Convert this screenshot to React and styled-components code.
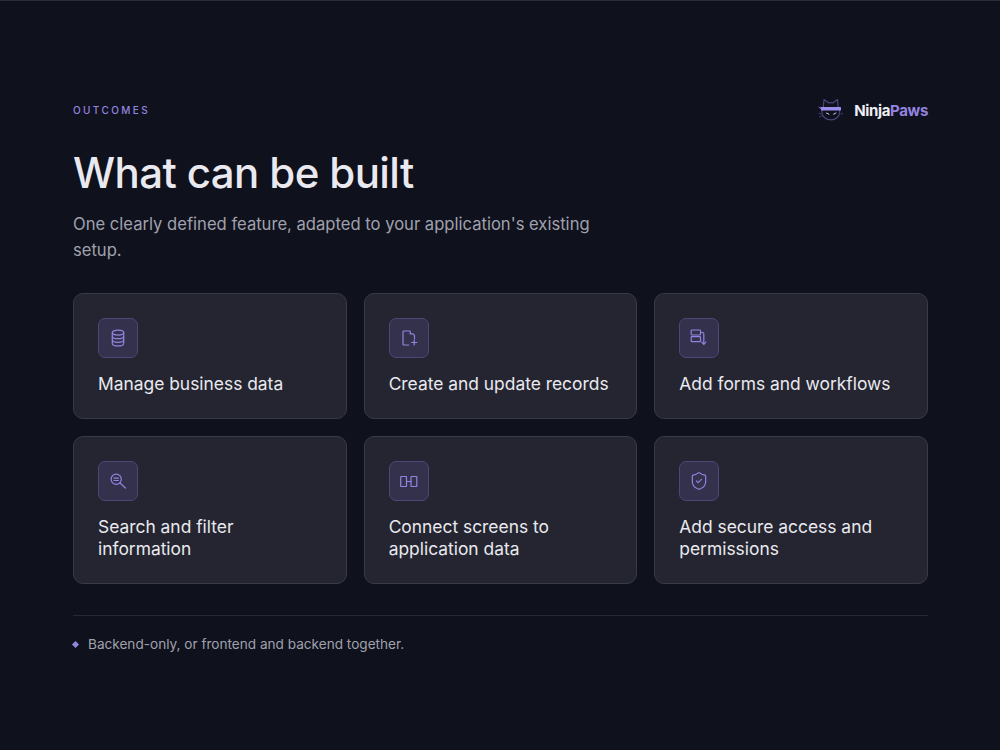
import React from "react";
import styled, { createGlobalStyle } from "styled-components";
import { ShieldCheck } from "lucide-react";

const GlobalStyle = createGlobalStyle`
  html, body {
    margin: 0;
    padding: 0;
    background: #0f111d;
  }
  * {
    box-sizing: border-box;
  }
`;

const DatabaseIcon = () => (
  <Glyph viewBox="0 0 18 18">
    <ellipse cx="9" cy="3.6" rx="5.7" ry="2.5" />
    <path d="M3.3 3.6v10.800c0 1.400 2.600 2.500 5.700 2.500s5.700-1.100 5.700-2.500V3.600" />
    <path d="M3.300 7.200c0 1.400 2.600 2.500 5.700 2.500s5.700-1.100 5.700-2.500" />
    <path d="M3.300 10.800c0 1.400 2.600 2.500 5.700 2.500s5.700-1.100 5.700-2.500" />
  </Glyph>
);

const FilePlusIcon = () => (
  <Glyph viewBox="0 0 18 18">
    <path d="M8.800 16H4a1 1 0 0 1-1-1V3a1 1 0 0 1 1-1h6.200v2.800H13l1.500 1.600v3.400" />
    <path d="M14.200 11v5M11.700 13.500h5" />
  </Glyph>
);

const FormsIcon = () => (
  <Glyph viewBox="0 0 18 18">
    <rect x="1.200" y="1" width="9.300" height="5" rx="0.800" />
    <rect x="1.200" y="7.700" width="9.300" height="5" rx="0.800" />
    <path d="M10.500 3.500h2.100a1.200 1.200 0 0 1 1.200 1.200v10.300" />
    <path d="M11.800 13.200l2 2.100 2-2.100" />
  </Glyph>
);

const SearchIcon = () => (
  <Glyph viewBox="0 0 18 18">
    <circle cx="7.200" cy="7.300" r="5.100" />
    <path d="M11 11l5.400 5" />
    <path d="M5 6.100h4.400M5 8.500h4.400" />
  </Glyph>
);

const ConnectIcon = () => (
  <Glyph viewBox="0 0 18 18">
    <rect x="0.700" y="4.500" width="5.800" height="10" rx="0.500" />
    <rect x="11" y="4.500" width="5.800" height="10" rx="0.500" />
    <path d="M6.500 9.500H11" />
  </Glyph>
);

const NinjaCat = () => (
  <svg width="26" height="24" viewBox="1 0 26 24" fill="none">
    <path
      d="M7.300 9.500 8 1.500l4.500 3.300c1.500-.3 3-.3 4.500 0l4.500-3.300.7 8c1.100 1.500 1.600 3.200 1.500 5-.3 4.300-4.100 7.400-8.900 7.400s-8.600-3.100-8.900-7.400c-.1-1.800.4-3.500 1.400-5Z"
      stroke="#4a4580"
      strokeWidth="1.200"
      strokeLinejoin="round"
    />
    <path d="M1.800 8.500 6 9.800V12Z" fill="#8a7bd8" />
    <rect x="5" y="9" width="20" height="3.600" rx="0.500" fill="#9c8cec" />
    <path d="M10.500 15l2.400 1.200M20 15l-2.400 1.200" stroke="#cfcbf0" strokeWidth="1" strokeLinecap="round" />
    <path d="M3 15.500l2 .5M27 15.500l-2 .5M3.500 19l2-1" stroke="#4a4580" strokeWidth="0.900" strokeLinecap="round" />
  </svg>
);

const outcomes = [
  { label: "Manage business data", icon: <DatabaseIcon /> },
  { label: "Create and update records", icon: <FilePlusIcon /> },
  { label: "Add forms and workflows", icon: <FormsIcon /> },
  { label: "Search and filter information", icon: <SearchIcon /> },
  { label: "Connect screens to application data", icon: <ConnectIcon /> },
  { label: "Add secure access and permissions", icon: <ShieldCheck size={20} strokeWidth={1.4} /> },
];

const App = () => {
  return (
    <Page>
      <GlobalStyle />
      <TopRow>
        <Eyebrow>OUTCOMES</Eyebrow>
        <Brand>
          <NinjaCat />
          <BrandName>
            Ninja<BrandAccent>Paws</BrandAccent>
          </BrandName>
        </Brand>
      </TopRow>
      <Title>What can be built</Title>
      <Subtitle>
        One clearly defined feature, adapted to your application's existing
        setup.
      </Subtitle>
      <CardGrid>
        {outcomes.map((item) => (
          <Card key={item.label}>
            <IconBox>{item.icon}</IconBox>
            <CardLabel>{item.label}</CardLabel>
          </Card>
        ))}
      </CardGrid>
      <Footer>
        <Diamond />
        <FooterText>Backend-only, or frontend and backend together.</FooterText>
      </Footer>
    </Page>
  );
};

const Page = styled.div`
  width: 1000px;
  height: 750px;
  overflow: hidden;
  padding: 95px 72px 0 73px;
  background: #0f111d;
  border-top: 1px solid #2a2d3a;
  font-family: Inter, "Liberation Sans", sans-serif;
`;

const TopRow = styled.div`
  display: flex;
  justify-content: space-between;
  align-items: center;
  height: 28px;
`;

const Eyebrow = styled.div`
  color: #9384e0;
  font-size: 10px;
  font-weight: 500;
  letter-spacing: 2.4px;
`;

const Brand = styled.div`
  display: flex;
  align-items: center;
  gap: 11px;
`;

const BrandName = styled.div`
  color: #eeeef4;
  font-size: 15px;
  font-weight: 700;
  letter-spacing: -0.35px;
`;

const BrandAccent = styled.span`
  color: #9384e0;
`;

const Title = styled.h1`
  margin: 21px 0 0;
  color: #e9e9ef;
  font-size: 42px;
  line-height: 56px;
  font-weight: 500;
  letter-spacing: -0.6px;
`;

const Subtitle = styled.p`
  margin: 10px 0 0;
  width: 560px;
  color: #a0a1ad;
  font-size: 16.6px;
  line-height: 26px;
  font-weight: 400;
`;

const CardGrid = styled.div`
  display: grid;
  grid-template-columns: repeat(3, 1fr);
  grid-template-rows: 126px 148px;
  gap: 17px;
  margin-top: 30px;
`;

const Card = styled.div`
  padding: 24px 24px 0;
  background: #242530;
  border: 1px solid #383a47;
  border-radius: 10px;
`;

const IconBox = styled.div`
  display: flex;
  align-items: center;
  justify-content: center;
  width: 40px;
  height: 40px;
  color: #9384e0;
  background: #33314c;
  border: 1px solid #4b4778;
  border-radius: 7px;
`;

const Glyph = styled.svg`
  width: 18px;
  height: 18px;
  fill: none;
  stroke: currentColor;
  stroke-width: 1.2;
  stroke-linecap: round;
  stroke-linejoin: round;
`;

const CardLabel = styled.div`
  margin-top: 15px;
  color: #e9e9ef;
  font-size: 17.4px;
  line-height: 22px;
  font-weight: 400;
`;

const Footer = styled.div`
  display: flex;
  align-items: center;
  gap: 10px;
  margin-top: 31px;
  padding-top: 19px;
  border-top: 1px solid #262833;
`;

const Diamond = styled.span`
  width: 5px;
  height: 5px;
  background: #9384e0;
  transform: rotate(45deg);
`;

const FooterText = styled.div`
  color: #a0a1ad;
  font-size: 13.6px;
  line-height: 18px;
`;

export default App;
